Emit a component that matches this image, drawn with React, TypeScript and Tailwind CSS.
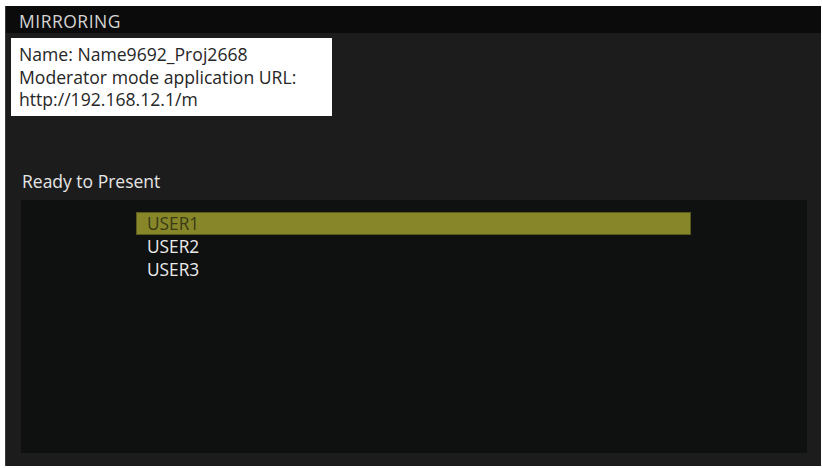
import React from "react";

export default function App() {
  const font = { fontFamily: '"Open Sans", "Noto Sans", sans-serif' };
  return (
    <div className="w-[823px] h-[468px] bg-white overflow-hidden" style={font}>
      <div className="ml-[5px] mt-[6px] w-[816px] h-[460px] bg-[#1c1c1c] flex flex-col border-l border-[#3a3a3a]">
        <div className="h-[27px] bg-[#0b0b0b] flex items-center pl-[13px] pt-[3px] text-[17.5px] tracking-[0.5px] text-[#d4d4d4]">
          MIRRORING
        </div>
        <div className="ml-[5px] mt-[5px] w-[321px] h-[78px] bg-white px-[8px] pt-[5px] text-[17.6px] leading-[22.5px] text-[#262626]">
          <div>Name: Name9692_Proj2668</div>
          <div>Moderator mode application URL:</div>
          <div>http://192.168.12.1/m</div>
        </div>
        <div className="mt-[54px] ml-[16px] h-[22px] flex items-center text-[17.5px] text-[#e6e6e6]">
          Ready to Present
        </div>
        <div className="ml-[15px] mt-[8px] w-[786px] h-[253px] bg-[#0f1010] pt-[12px] pl-[115px]">
          <div className="w-[555px] h-[23px] bg-[#87872a] border border-[#5a5a1c] flex items-center pl-[10px] text-[17.3px] text-[#3a3a14]">
            USER1
          </div>
          <div className="h-[23px] flex items-center pl-[11px] text-[17.3px] text-[#ececec]">USER2</div>
          <div className="h-[23px] flex items-center pl-[11px] text-[17.3px] text-[#ececec]">USER3</div>
        </div>
      </div>
    </div>
  );
}
